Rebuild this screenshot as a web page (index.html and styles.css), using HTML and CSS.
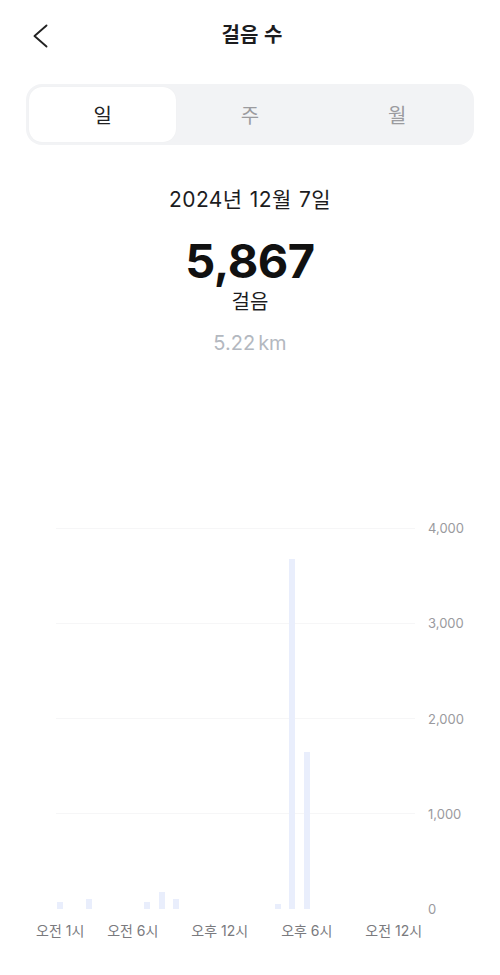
FILE: index.html
```html
<!DOCTYPE html>
<html lang="ko">
<head>
<meta charset="utf-8">
<title>걸음 수</title>
<link rel="stylesheet" href="styles.css">
</head>
<body>
<div class="page">
  <header class="topbar">
    <button class="back" aria-label="뒤로">
      <svg width="16" height="24" viewBox="0 0 16 24"><polyline points="14.5,1.5 2.5,12 14.5,22.5" fill="none" stroke="#222" stroke-width="1.9" stroke-linecap="round" stroke-linejoin="round"/></svg>
    </button>
    <h1 class="title">걸음 수</h1>
    <span class="spacer"></span>
  </header>

  <nav class="segment">
    <div class="tab active">일</div>
    <div class="tab">주</div>
    <div class="tab">월</div>
  </nav>

  <section class="summary">
    <div class="date">2024년 12월 7일</div>
    <div class="count">5,867</div>
    <div class="unit">걸음</div>
    <div class="distance">5.22<span class="km">km</span></div>
  </section>

  <section class="chart">
    <div class="plot">
      <div class="grid">
        <div class="gline"></div>
        <div class="gline"></div>
        <div class="gline"></div>
        <div class="gline"></div>
        <div class="gline base"></div>
      </div>
      <div class="bars">
        <div class="slot"><div class="bar" style="height:7px"></div></div>
        <div class="slot"></div>
        <div class="slot"><div class="bar" style="height:10px"></div></div>
        <div class="slot"></div>
        <div class="slot"></div>
        <div class="slot"></div>
        <div class="slot"><div class="bar" style="height:7px"></div></div>
        <div class="slot"><div class="bar" style="height:17px"></div></div>
        <div class="slot"><div class="bar" style="height:10px"></div></div>
        <div class="slot"></div>
        <div class="slot"></div>
        <div class="slot"></div>
        <div class="slot"></div>
        <div class="slot"></div>
        <div class="slot"></div>
        <div class="slot"><div class="bar" style="height:5px"></div></div>
        <div class="slot"><div class="bar" style="height:350px"></div></div>
        <div class="slot"><div class="bar" style="height:157px"></div></div>
        <div class="slot"></div>
        <div class="slot"></div>
        <div class="slot"></div>
        <div class="slot"></div>
        <div class="slot"></div>
        <div class="slot"></div>
      </div>
    </div>
    <div class="yaxis">
      <span>4,000</span>
      <span>3,000</span>
      <span>2,000</span>
      <span>1,000</span>
      <span>0</span>
    </div>
    <div class="xaxis">
      <div class="xl c1"><span>오전 1시</span></div>
      <div class="xl c6"><span>오전 6시</span></div>
      <div class="xl c12"><span>오후 12시</span></div>
      <div class="xl c18"><span>오후 6시</span></div>
      <div class="xl c24"><span>오전 12시</span></div>
    </div>
  </section>
</div>
</body>
</html>
```

FILE: styles.css
```css
* { box-sizing: border-box; }

html, body {
  margin: 0;
  padding: 0;
  background: #ffffff;
}

body {
  font-family: Inter, "Noto Sans CJK KR", sans-serif;
  color: #1c1c1e;
}

.page {
  width: 500px;
  height: 975px;
  overflow: hidden;
}

/* top bar */
.topbar {
  height: 68px;
  display: flex;
  align-items: center;
  padding: 0 24px 0 32px;
}

.back {
  width: 40px;
  height: 40px;
  padding: 0;
  margin: 4px 0 0 0;
  border: none;
  background: none;
  display: flex;
  align-items: center;
  justify-content: flex-start;
}

.title {
  flex: 1;
  margin: 0 0 0 -4px;
  text-align: center;
  font-size: 20px;
  font-weight: 700;
  line-height: 28px;
  color: #1c1c1e;
  font-family: "Noto Sans CJK KR", sans-serif;
}

.spacer {
  width: 40px;
}

/* segmented control */
.segment {
  margin: 16px 26px 0;
  height: 61px;
  padding: 3px;
  border-radius: 16px;
  background: #f2f3f5;
  display: flex;
}

.tab {
  flex: 1;
  display: flex;
  align-items: center;
  justify-content: center;
  font-size: 20px;
  font-family: "Noto Sans CJK KR", sans-serif;
  color: #9b9b9f;
  border-radius: 13px;
}

.tab.active {
  background: #ffffff;
  color: #222222;
  box-shadow: 0 0 1px rgba(0, 0, 0, 0.06);
}

/* summary */
.summary {
  margin-top: 41px;
  display: flex;
  flex-direction: column;
  align-items: center;
}

.date {
  font-size: 21px;
  line-height: 28px;
  color: #1c1c1e;
  letter-spacing: 0.4px;
  word-spacing: 1px;
}

.count {
  margin-top: 22px;
  font-size: 47px;
  line-height: 50px;
  font-weight: 700;
  color: #111111;
  letter-spacing: -0.5px;
}

.unit {
  margin-top: 2px;
  font-size: 20px;
  line-height: 26px;
  color: #1c1c1e;
  font-family: "Noto Sans CJK KR", sans-serif;
}

.distance {
  margin-top: 16px;
  font-size: 20px;
  line-height: 26px;
  color: #b3b8c0;
}

.km {
  margin-left: 3px;
}

/* chart */
.chart {
  margin-top: 172px;
  display: grid;
  grid-template-columns: 53px 362px 13px 1fr;
  grid-template-rows: 381px auto;
}

.plot {
  grid-column: 2;
  grid-row: 1;
  display: grid;
}

.grid, .bars {
  grid-area: 1 / 1;
}

.grid {
  display: flex;
  flex-direction: column;
  justify-content: space-between;
  padding-left: 3px;
}

.gline {
  height: 1px;
  background: #f6f6f7;
}

.gline.base {
  background: transparent;
}

.bars {
  width: 348px;
  display: grid;
  grid-template-columns: repeat(24, 14.5px);
  align-items: end;
}

.slot {
  height: 100%;
  display: flex;
  align-items: flex-end;
  justify-content: center;
}

.bar {
  width: 6px;
  background: #e9eefc;
}

.yaxis {
  grid-column: 4;
  grid-row: 1;
  display: flex;
  flex-direction: column;
  justify-content: space-between;
  margin: -9px 0 -9px 0;
  font-size: 13px;
  line-height: 18px;
  color: #9a9a9e;
}

.xaxis {
  grid-column: 2;
  grid-row: 2;
  width: 348px;
  margin-top: 12px;
  display: grid;
  grid-template-columns: repeat(24, 14.5px);
  font-size: 14px;
  line-height: 20px;
  color: #7a7a7e;
}

.xl {
  display: flex;
  justify-content: center;
  white-space: nowrap;
}

.c1 { grid-column: 1; }
.c6 { grid-column: 6; }
.c12 { grid-column: 12; }
.c18 { grid-column: 18; }
.c24 { grid-column: 24; }
```
